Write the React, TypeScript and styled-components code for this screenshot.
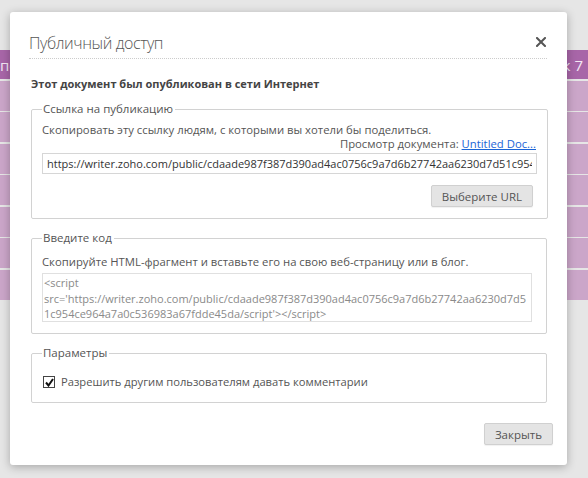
import styled, { createGlobalStyle } from "styled-components";

const GlobalStyle = createGlobalStyle`
  html, body {
    margin: 0;
    padding: 0;
  }
  body {
    font-family: "Open Sans", "Noto Sans", sans-serif;
    background: #e6e6e6;
  }
`;

const Page = styled.div`
  position: relative;
  height: 478px;
  overflow: hidden;
  background: #e6e6e6;
`;

const Sheet = styled.div`
  display: flex;
  flex-direction: column;
  gap: 1.5px;
  padding-top: 50px;
`;

const HeadRow = styled.div`
  display: flex;
  justify-content: space-between;
  align-items: center;
  height: 29px;
  padding-right: 5px;
  background: #a866a8;
  color: #f4e8f4;
  font-size: 15px;
`;

const BodyRow = styled.div`
  height: 30px;
  background: #cba6c9;
`;

const Dialog = styled.div`
  position: absolute;
  left: 10px;
  top: 12px;
  width: 557px;
  padding-bottom: 20px;
  background: #fff;
  border-radius: 3px;
  box-shadow: 0 2px 10px rgba(0, 0, 0, 0.28);
  display: flex;
  flex-direction: column;
  color: #555;
  font-size: 11px;
`;

const Header = styled.div`
  display: flex;
  align-items: flex-start;
  justify-content: space-between;
  margin: 0 20px 0 19px;
  height: 46px;
  border-bottom: 1px dotted #ccc;
`;

const Title = styled.h2`
  margin: 0;
  padding-top: 21px;
  font-size: 16px;
  line-height: 20px;
  font-weight: 300;
  letter-spacing: -0.4px;
  color: #555;
`;

const CloseButton = styled.button`
  display: flex;
  align-items: center;
  justify-content: center;
  border: 0;
  background: none;
  padding: 0;
  margin: 25px 1px 0 0;
  width: 10px;
  height: 10px;
  cursor: pointer;
`;

const Content = styled.div`
  display: flex;
  flex-direction: column;
  padding: 0 20px 0 21px;
`;

const Lead = styled.p`
  margin: 17px 0 10px;
  line-height: 15px;
  font-size: 11px;
  font-weight: 700;
  color: #444;
`;

const Group = styled.fieldset<{ $gap?: number; $top?: number; $bottom?: number }>`
  margin: 0 0 ${(p) => p.$gap ?? 0}px;
  padding: ${(p) => p.$top ?? 6}px 10px ${(p) => p.$bottom ?? 10}px;
  border: 1px solid #d2d2d2;
  border-radius: 2px;
  display: flex;
  flex-direction: column;
  flex-shrink: 0;
`;

const Legend = styled.legend`
  padding: 0 2px 0 1px;
  font-size: 11.5px;
  line-height: 16px;
  color: #555;
`;

const Note = styled.div<{ $right?: boolean }>`
  font-size: 11.3px;
  line-height: 14px;
  text-align: ${(p) => (p.$right ? "right" : "left")};
  padding-right: ${(p) => (p.$right ? "1px" : "0")};
  color: #555;
`;

const Link = styled.a`
  color: #1a64d6;
  text-decoration: underline;
`;

const UrlField = styled.input`
  margin-top: 2px;
  height: 21px;
  box-sizing: border-box;
  width: 495px;
  padding: 0 4px;
  border: 1px solid #d6d6d6;
  font-family: inherit;
  font-size: 11px;
  color: #333;
  outline: none;
`;

const Actions = styled.div`
  display: flex;
  justify-content: flex-end;
  padding-right: 4px;
  margin-top: 11px;
`;

const Button = styled.button`
  height: 22px;
  padding: 0 10px;
  border: 1px solid #d0d0d0;
  border-radius: 2px;
  background: #e4e4e4;
  color: #555;
  font-family: inherit;
  font-size: 11.5px;
  box-shadow: 0 1px 1px rgba(0, 0, 0, 0.06);
  cursor: pointer;
`;

const Snippet = styled.textarea`
  margin-top: 4px;
  width: 490px;
  height: 49px;
  box-sizing: border-box;
  padding: 1px 1px;
  border: 1px solid #e0e0e0;
  font-family: inherit;
  font-size: 11px;
  line-height: 15.5px;
  color: #8a8a8a;
  resize: none;
  overflow: hidden;
  outline: none;
`;

const CheckRow = styled.label`
  display: flex;
  align-items: center;
  gap: 6px;
  padding: 7px 0 2px 1px;
  font-size: 11.2px;
  line-height: 16px;
  color: #555;
`;

const CheckBox = styled.span`
  display: inline-flex;
  align-items: center;
  justify-content: center;
  width: 10px;
  height: 10px;
  border: 1px solid #444;
  background: #fff;
`;

const Footer = styled.div`
  display: flex;
  justify-content: flex-end;
  margin: 20px -6px 0 0;
`;

const url =
  "https://writer.zoho.com/public/cdaade987f387d390ad4ac0756c9a7d6b27742aa6230d7d51c954ce964a7a0c536983a67fdde45da";

export default function App() {
  return (
    <>
      <GlobalStyle />
      <Page>
        <Sheet>
          <HeadRow>
            <span>по</span>
            <span>к 7</span>
          </HeadRow>
          {Array.from({ length: 7 }).map((_, i) => (
            <BodyRow key={i} />
          ))}
        </Sheet>

        <Dialog>
          <Header>
            <Title>Публичный доступ</Title>
            <CloseButton aria-label="Закрыть">
              <svg width="10" height="10" viewBox="0 0 10 10">
                <path
                  d="M1 1 L9 9 M9 1 L1 9"
                  stroke="#555"
                  strokeWidth="2"
                  strokeLinecap="square"
                />
              </svg>
            </CloseButton>
          </Header>

          <Content>
            <Lead>Этот документ был опубликован в сети Интернет</Lead>

            <Group $gap={11} $bottom={11}>
              <Legend>Ссылка на публикацию</Legend>
              <Note>Скопировать эту ссылку людям, с которыми вы хотели бы поделиться.</Note>
              <Note $right>
                Просмотр документа: <Link href="#">Untitled Doc...</Link>
              </Note>
              <UrlField readOnly value={url} />
              <Actions>
                <Button>Выберите URL</Button>
              </Actions>
            </Group>

            <Group $gap={11} $top={9} $bottom={11}>
              <Legend>Введите код</Legend>
              <Note>
                Скопируйте HTML-фрагмент и вставьте его на свою веб-страницу или в блог.
              </Note>
              <Snippet readOnly value={`<script src='${url}/script'></script>`} />
            </Group>

            <Group>
              <Legend>Параметры</Legend>
              <CheckRow>
                <CheckBox>
                  <svg width="9" height="9" viewBox="0 0 9 9">
                    <path d="M1 4.5 L3.5 7.5 L8 1" fill="none" stroke="#111" strokeWidth="2" />
                  </svg>
                </CheckBox>
                Разрешить другим пользователям давать комментарии
              </CheckRow>
            </Group>

            <Footer>
              <Button>Закрыть</Button>
            </Footer>
          </Content>
        </Dialog>
      </Page>
    </>
  );
}
